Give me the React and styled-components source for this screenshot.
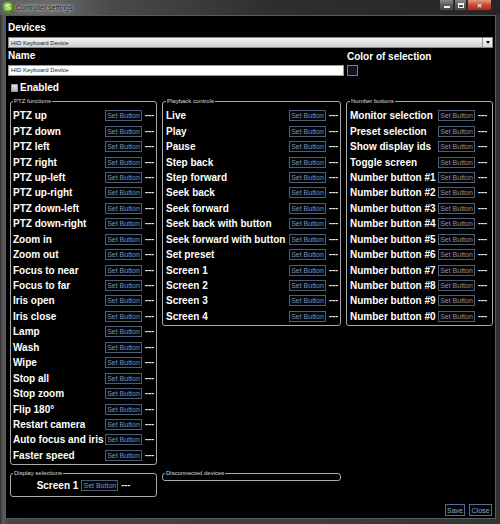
import React from "react";
import styled, { createGlobalStyle } from "styled-components";

const GlobalStyle = createGlobalStyle`
  html, body {
    margin: 0;
    padding: 0;
    background: #000;
  }
  body {
    font-family: "Liberation Sans", Arial, sans-serif;
  }
  * {
    box-sizing: border-box;
  }
`;

const Window = styled.div`
  width: 500px;
  height: 524px;
  display: flex;
  flex-direction: column;
  background: linear-gradient(90deg, #2e2e2e 0px, #5c5c5c 3px, #464646 8px, #3e3e3e 60%, #333 100%);
`;

const TitleBar = styled.div`
  height: 15px;
  display: flex;
  align-items: center;
  padding-left: 3px;
  background: linear-gradient(90deg, #5e5e5e 0%, #6a6a6a 10%, #4a4a4a 22%, #2e2e2e 55%, #262626 100%);
`;

const AppIcon = styled.span`
  width: 10px;
  height: 11px;
  border-radius: 3px;
  background: radial-gradient(circle at 40% 35%, #a6d860, #4f8d1a 70%, #2f5e0c);
  color: #eaf7d8;
  font-size: 9px;
  font-weight: bold;
  line-height: 11px;
  text-align: center;
`;

const TitleText = styled.span`
  margin-left: 3px;
  font-size: 7px;
  color: #1a1a1a;
  text-shadow: 0 0 3px rgba(255, 255, 255, 0.9), 0 0 5px rgba(255, 255, 255, 0.6);
`;

const Controls = styled.div`
  margin-left: auto;
  margin-right: 8px;
  align-self: flex-start;
  display: flex;
`;

const CtlButton = styled.span`
  width: ${(p) => p.$w}px;
  height: 11px;
  display: flex;
  align-items: center;
  justify-content: center;
  border: 1px solid #2a2a2a;
  border-top: none;
  background: ${(p) =>
    p.$close
      ? "linear-gradient(#e49a88, #c94a30 50%, #b02a10)"
      : "linear-gradient(#8a8a8a, #5a5a5a 50%, #484848)"};
  border-radius: ${(p) => p.$radius || "0"};
  color: #fff;
  font-size: 8px;
  font-weight: bold;
`;

const MinGlyph = styled.span`
  width: 6px;
  height: 2px;
  margin-top: 4px;
  background: #f0f0f0;
`;

const MaxGlyph = styled.span`
  width: 6px;
  height: 5px;
  border: 1px solid #f0f0f0;
  border-top-width: 2px;
`;

const Body = styled.div`
  flex: 1;
  display: flex;
  padding: 0 5px 5px;
`;

const Content = styled.div`
  flex: 1;
  display: flex;
  flex-direction: column;
  background: #000;
  border: 1px solid #5a5a5a;
  padding: 6px 2px 2px;
`;

const Heading = styled.div`
  font-size: 10px;
  line-height: 12px;
  font-weight: bold;
  color: #fff;
  margin-top: ${(p) => p.$mt || 0}px;
`;

const Select = styled.div`
  margin-top: 3px;
  height: 11px;
  display: flex;
  align-items: center;
  border: 1px solid #8a8a8a;
  background: linear-gradient(#f6f6f6, #e2e2e2 50%, #d2d2d2);
  font-size: 6px;
  color: #222;
  padding-left: 2px;
`;

const SelectValue = styled.span`
  flex: 1;
`;

const Arrow = styled.span`
  width: 10px;
  height: 100%;
  display: flex;
  align-items: center;
  justify-content: center;
  border-left: 1px solid #9a9a9a;
  background: linear-gradient(#fafafa, #dcdcdc);

  &::after {
    content: "";
    border-left: 2px solid transparent;
    border-right: 2px solid transparent;
    border-top: 3px solid #111;
  }
`;

const NameRow = styled.div`
  display: flex;
  gap: 3px;
  margin-top: 2px;
`;

const NameCol = styled.div`
  flex: 1;
  display: flex;
  flex-direction: column;
`;

const ColorCol = styled.div`
  width: 146px;
  display: flex;
  flex-direction: column;
`;

const TextInput = styled.div`
  margin-top: 3px;
  height: 11px;
  background: #fff;
  border: 1px solid #9a9a9a;
  font-size: 6px;
  line-height: 9px;
  color: #222;
  padding-left: 2px;
`;

const Swatch = styled.div`
  margin-top: 2px;
  width: 11px;
  height: 11px;
  border: 1px solid #7a8290;
  background: #0e1520;
`;

const EnabledRow = styled.div`
  margin-top: 6px;
  padding-left: 3px;
  display: flex;
  align-items: center;
  gap: 2px;
  font-size: 10px;
  line-height: 12px;
  font-weight: bold;
  color: #fff;
`;

const Check = styled.span`
  width: 7px;
  height: 8px;
  background: linear-gradient(#e0e0e0, #b8b8b8);
  border: 1px solid #999;
`;

const Groups = styled.div`
  margin-top: 3px;
  padding-left: 2px;
  display: grid;
  grid-template-columns: 147px 179px 147px;
  column-gap: 5px;
  row-gap: 4px;
  align-items: start;
`;

const Group = styled.fieldset`
  margin: 0;
  min-width: 0;
  border: 1px solid #a8a8a8;
  border-radius: 3px;
  padding: ${(p) => p.$pad || "3px 2px 1px 2px"};
`;

const Legend = styled.legend`
  font-size: 6px;
  line-height: 8px;
  color: #dcdcdc;
  padding: 0 1px;
`;

const Row = styled.div`
  display: flex;
  align-items: center;
  justify-content: ${(p) => (p.$center ? "center" : "flex-start")};
  height: 15.45px;
`;

const Label = styled.span`
  flex: ${(p) => (p.$center ? "none" : "1")};
  margin-right: ${(p) => (p.$center ? "3px" : "0")};
  font-size: 10px;
  font-weight: bold;
  color: #fff;
  white-space: nowrap;
`;

const SetButton = styled.button`
  width: 37px;
  height: 11px;
  padding: 0;
  margin: 0;
  background: #02050a;
  border: 1px solid #4f5d72;
  color: #8590a4;
  font-family: "Liberation Sans", Arial, sans-serif;
  font-size: 7px;
  line-height: 9px;
`;

const Dash = styled.span`
  width: 9px;
  margin-left: 3px;
  font-size: 9px;
  font-weight: bold;
  color: #fff;
  line-height: 11px;
`;

const Spacer = styled.div`
  height: 3px;
`;

const Footer = styled.div`
  margin-top: auto;
  display: flex;
  justify-content: flex-end;
  gap: 4px;
  padding-right: 1px;
`;

const FooterButton = styled.button`
  width: ${(p) => p.$w}px;
  height: 12px;
  padding: 0;
  background: #03060c;
  border: 1px solid #566c8e;
  color: #91a2ba;
  font-family: "Liberation Sans", Arial, sans-serif;
  font-size: 7px;
`;

const ptz = [
  "PTZ up",
  "PTZ down",
  "PTZ left",
  "PTZ right",
  "PTZ up-left",
  "PTZ up-right",
  "PTZ down-left",
  "PTZ down-right",
  "Zoom in",
  "Zoom out",
  "Focus to near",
  "Focus to far",
  "Iris open",
  "Iris close",
  "Lamp",
  "Wash",
  "Wipe",
  "Stop all",
  "Stop zoom",
  "Flip 180°",
  "Restart camera",
  "Auto focus and iris",
  "Faster speed",
];

const playback = [
  "Live",
  "Play",
  "Pause",
  "Step back",
  "Step forward",
  "Seek back",
  "Seek forward",
  "Seek back with button",
  "Seek forward with button",
  "Set preset",
  "Screen 1",
  "Screen 2",
  "Screen 3",
  "Screen 4",
];

const numbers = [
  "Monitor selection",
  "Preset selection",
  "Show display ids",
  "Toggle screen",
  "Number button #1",
  "Number button #2",
  "Number button #3",
  "Number button #4",
  "Number button #5",
  "Number button #6",
  "Number button #7",
  "Number button #8",
  "Number button #9",
  "Number button #0",
];

const Binding = ({ label, center }) => (
  <Row $center={center}>
    <Label $center={center}>{label}</Label>
    <SetButton>Set Button</SetButton>
    <Dash>---</Dash>
  </Row>
);

const App = () => {
  return (
    <Window>
      <GlobalStyle />
      <TitleBar>
        <AppIcon>S</AppIcon>
        <TitleText>Controller settings</TitleText>
        <Controls>
          <CtlButton $w={15} $radius="0 0 0 3px">
            <MinGlyph />
          </CtlButton>
          <CtlButton $w={13}>
            <MaxGlyph />
          </CtlButton>
          <CtlButton $w={25} $close $radius="0 0 3px 0">
            ×
          </CtlButton>
        </Controls>
      </TitleBar>
      <Body>
        <Content>
          <Heading>Devices</Heading>
          <Select>
            <SelectValue>HID Keyboard Device</SelectValue>
            <Arrow />
          </Select>
          <NameRow>
            <NameCol>
              <Heading>Name</Heading>
              <TextInput>HID Keyboard Device</TextInput>
            </NameCol>
            <ColorCol>
              <Heading $mt={1}>Color of selection</Heading>
              <Swatch />
            </ColorCol>
          </NameRow>
          <EnabledRow>
            <Check />
            Enabled
          </EnabledRow>
          <Groups>
            <Group>
              <Legend>PTZ functions</Legend>
              {ptz.map((l) => (
                <Binding key={l} label={l} />
              ))}
            </Group>
            <Group $pad="3px 2px 1px 3px">
              <Legend>Playback controls</Legend>
              {playback.map((l) => (
                <Binding key={l} label={l} />
              ))}
            </Group>
            <Group $pad="3px 5px 1px 3px">
              <Legend>Number buttons</Legend>
              {numbers.map((l) => (
                <Binding key={l} label={l} />
              ))}
            </Group>
            <Group $pad="1px 2px 2px 2px">
              <Legend>Display selections</Legend>
              <Binding label="Screen 1" center />
            </Group>
            <Group $pad="0 2px">
              <Legend>Disconnected devices</Legend>
              <Spacer />
            </Group>
          </Groups>
          <Footer>
            <FooterButton $w={20}>Save</FooterButton>
            <FooterButton $w={23}>Close</FooterButton>
          </Footer>
        </Content>
      </Body>
    </Window>
  );
};

export default App;
